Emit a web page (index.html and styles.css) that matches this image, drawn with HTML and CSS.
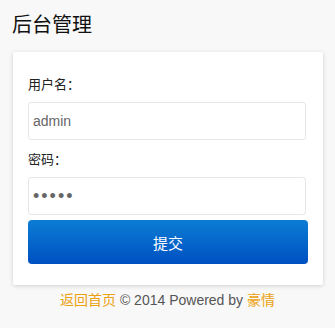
FILE: index.html
```html
<!DOCTYPE html>
<html lang="zh-CN">
<head>
<meta charset="utf-8">
<title>后台管理</title>
<link rel="stylesheet" href="styles.css">
</head>
<body>
<h1 class="title">后台管理</h1>
<form class="card">
  <label class="label" for="user">用户名：</label>
  <input class="field" id="user" type="text" placeholder="admin">
  <label class="label" for="pwd">密码：</label>
  <input class="field field-pwd" id="pwd" type="password" value="12345">
  <button class="submit" type="button">提交</button>
</form>
<p class="footer"><a class="link" href="#">返回首页</a> © 2014 Powered by <a class="link" href="#">豪情</a></p>
</body>
</html>
```

FILE: styles.css
```css
html, body {
  margin: 0;
  background: #f8f8f8;
}
body {
  padding: 12px 12px 0;
  font-family: "Liberation Sans", "Noto Sans CJK SC", sans-serif;
  color: #222;
}
.title {
  margin: 0;
  font-size: 20px;
  line-height: 24px;
  font-weight: normal;
  color: #111;
  font-family: "Noto Sans CJK SC", sans-serif;
}
.card {
  margin: 16px 0 0 1px;
  background: #fff;
  border-radius: 2px;
  box-shadow: 0 1px 4px rgba(0, 0, 0, 0.16);
  padding: 22px 15px 21px;
  display: flex;
  flex-direction: column;
}
.label {
  font-size: 13px;
  line-height: 20px;
  margin-bottom: 8px;
  color: #222;
  font-family: "Noto Sans CJK SC", sans-serif;
}
.field {
  box-sizing: border-box;
  width: calc(100% - 2px);
  height: 38px;
  margin: 0 0 9px;
  padding: 0 4px;
  border: 1px solid #e6e6e6;
  border-radius: 3px;
  font-family: "Liberation Sans", sans-serif;
  font-size: 14px;
  color: #666;
  background: #fff;
  outline: none;
}
.field-pwd {
  font-size: 18px;
  letter-spacing: 2px;
  color: #666;
}
.field::placeholder {
  color: #666;
}
.submit {
  margin-top: -4px;
  height: 44px;
  border: 0;
  border-radius: 4px;
  background: linear-gradient(#0b7dd4, #0050c2);
  color: #fff;
  font-size: 15px;
  font-family: "Noto Sans CJK SC", sans-serif;
}
.footer {
  margin: 4px 0 0;
  text-align: center;
  font-size: 14px;
  line-height: 20px;
  color: #555;
}
.link {
  color: #eca10f;
  text-decoration: none;
  font-family: "Noto Sans CJK SC", sans-serif;
}
```
